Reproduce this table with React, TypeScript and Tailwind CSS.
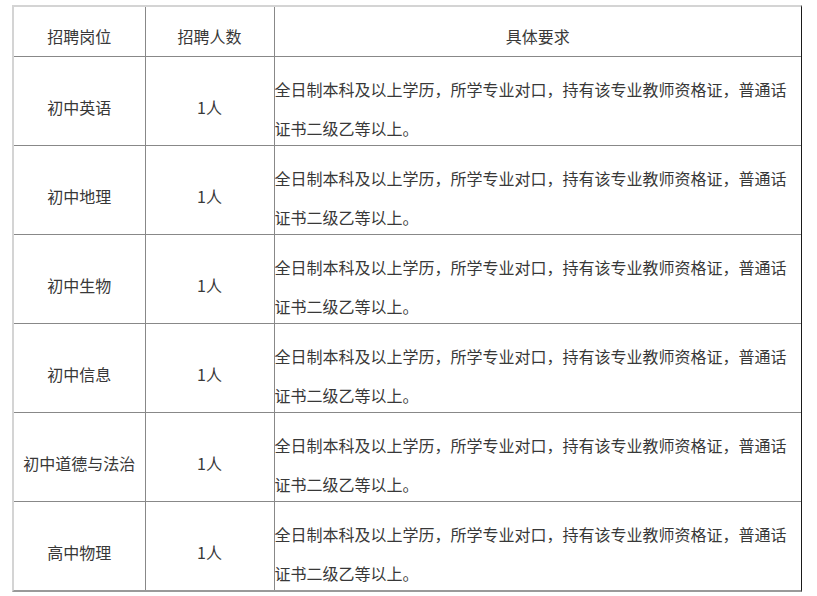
import * as React from "react";

const positions = ["初中英语", "初中地理", "初中生物", "初中信息", "初中道德与法治", "高中物理"];

const requirement =
  "全日制本科及以上学历，所学专业对口，持有该专业教师资格证，普通话证书二级乙等以上。";

export default function App() {
  return (
    <div className="w-[817px] h-[596px] bg-white overflow-hidden pt-[5px] pl-[12px]">
      <div
        className="w-[790px] border-t-2 border-l-2 border-r border-b-2 border-t-[#d4d4d4] border-l-[#d4d4d4] border-r-[#1a1a1a] border-b-[#9a9a9a] text-[16px] text-[#383838]"
        style={{ fontFamily: '"Noto Sans CJK SC", "Noto Sans", sans-serif' }}
      >
        <table className="w-full border-collapse table-fixed">
          <colgroup>
            <col className="w-[131px]" />
            <col className="w-[129px]" />
            <col />
          </colgroup>
          <thead>
            <tr>
              <th className="h-[49px] p-0 border-r border-b border-[#888888] font-normal text-center align-middle">
                <div className="pt-[9px] leading-[22px]">招聘岗位</div>
              </th>
              <th className="h-[49px] p-0 border-r border-b border-[#888888] font-normal text-center align-middle">
                <div className="pt-[9px] leading-[22px]">招聘人数</div>
              </th>
              <th className="h-[49px] p-0 border-b border-[#888888] font-normal text-center align-middle">
                <div className="pt-[9px] leading-[22px]">具体要求</div>
              </th>
            </tr>
          </thead>
          <tbody>
            {positions.map((p, i) => (
              <tr key={p}>
                <td
                  className={`h-[88px] p-0 border-r border-[#888888] text-center align-middle ${
                    i < positions.length - 1 ? "border-b" : ""
                  }`}
                >
                  <div className="pt-[12px] leading-[22px]">{p}</div>
                </td>
                <td
                  className={`h-[88px] p-0 border-r border-[#888888] text-center align-middle ${
                    i < positions.length - 1 ? "border-b" : ""
                  }`}
                >
                  <div className="pt-[12px] leading-[22px]">1人</div>
                </td>
                <td
                  className={`h-[88px] p-0 border-[#888888] text-left align-top ${
                    i < positions.length - 1 ? "border-b" : ""
                  }`}
                >
                  <div className="pt-[13px] -mb-[3px] leading-[39px]">{requirement}</div>
                </td>
              </tr>
            ))}
          </tbody>
        </table>
      </div>
    </div>
  );
}
